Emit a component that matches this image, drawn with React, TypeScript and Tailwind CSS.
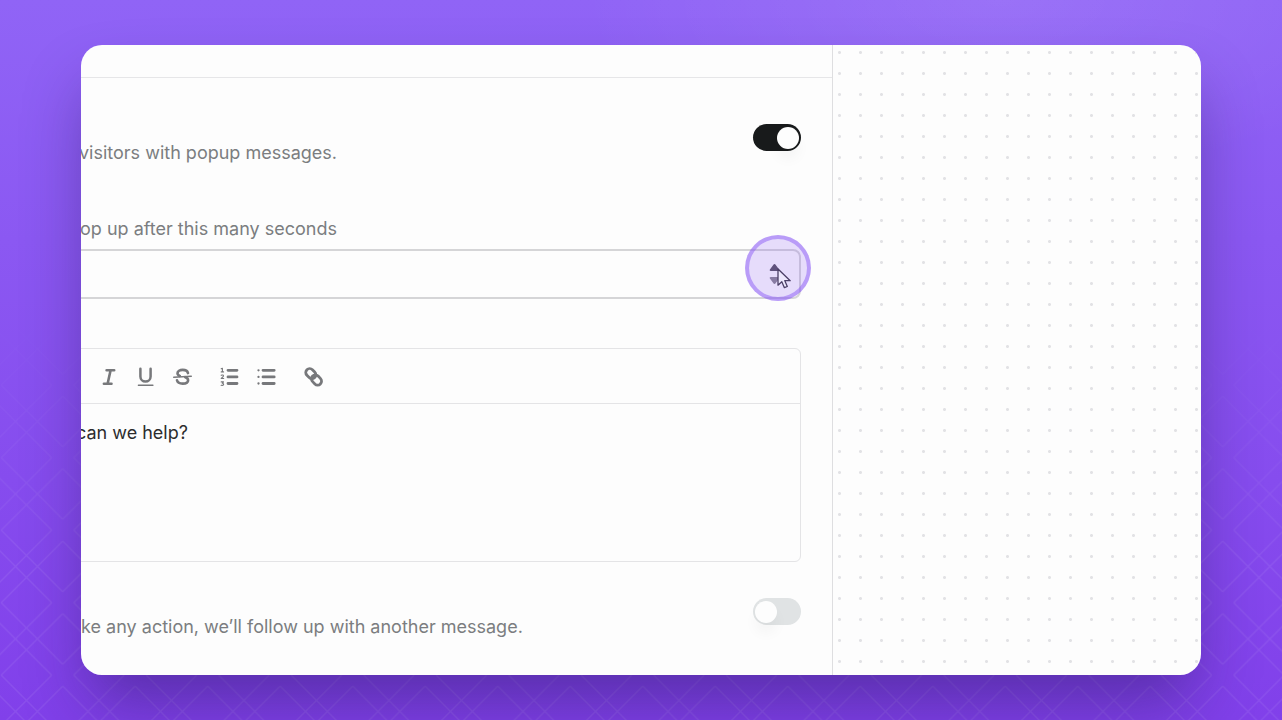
import { useState } from 'react'
import type { ReactNode } from 'react'

function ItalicIcon() {
  return (
    <svg className="size-[22px]" viewBox="0 0 22 22" fill="none" stroke="currentColor" strokeWidth="2.6" strokeLinecap="round">
      <path d="M8.6 5.2h7.6M5.9 18.7h7.6M12.6 5.2 9.6 18.7" />
    </svg>
  )
}

function UnderlineIcon() {
  return (
    <svg className="size-[22px]" viewBox="0 0 22 22" fill="none" stroke="currentColor" strokeLinecap="round">
      <path d="M5.4 3.7v7.8a5.1 5.1 0 0 0 10.2 0V3.7" strokeWidth="2.5" />
      <path d="M3.4 20.3h14.5" strokeWidth="1.4" />
    </svg>
  )
}

function StrikeIcon() {
  return (
    <svg className="size-[22px]" viewBox="0 0 22 22" fill="none" stroke="currentColor" strokeLinecap="round">
      <path
        d="M16 8.1C15.5 6.1 13.4 4.9 10.7 4.9 7.8 4.9 5.5 6.200 5.5 8.3c0 1.3.8 2.1 2.3 2.6M13.2 12.2c1.9.5 2.9 1.5 2.9 3 0 2.1-2.2 3.4-5.4 3.4-3 0-5.2-1.2-5.7-3.3"
        strokeWidth="2.6"
      />
      <path d="M1.7 12.2 19.3 11.2" strokeWidth="1.4" />
    </svg>
  )
}

function NumberedListIcon() {
  return (
    <svg className="size-[22px]" viewBox="0 0 22 22" fill="none" stroke="currentColor" strokeLinecap="round" strokeLinejoin="round">
      <path d="M9 5.3h9M9 11.9h9M9 18.5h9" strokeWidth="2.8" />
      <path
        d="M2.2 3.8l1.2-.6v3.6M2.2 6.9h2.4M2.2 10.3c1.3-.8 2.6-.1 2.2 1-.3.7-1.3 1.1-2.2 2.2h2.5M2.2 16.9h2.3l-1.2 1.4c2.1 0 1.7 2.6-1.2 2"
        strokeWidth="1.1"
      />
    </svg>
  )
}

function BulletListIcon() {
  return (
    <svg className="size-[22px]" viewBox="0 0 22 22" fill="none" stroke="currentColor" strokeLinecap="round">
      <path d="M7 5.3h11.2M7 11.9h11.2M7 18.5h11.2" strokeWidth="2.8" />
      <path d="M2.5 5.3h.01M2.5 11.9h.01M2.5 18.5h.01" strokeWidth="2.3" />
    </svg>
  )
}

function LinkIcon() {
  return (
    <svg className="size-[22px]" viewBox="0 0 22 22" fill="none" stroke="currentColor" strokeWidth="2.8">
      <rect x="2.3" y="4.7" width="11" height="7.8" rx="3.9" transform="rotate(45 7.8 8.6)" />
      <rect x="8" y="11.1" width="11" height="7.8" rx="3.9" transform="rotate(45 13.5 15)" />
    </svg>
  )
}

const TOOL_GROUPS = [
  [
    { label: 'Italic', icon: ItalicIcon },
    { label: 'Underline', icon: UnderlineIcon },
    { label: 'Strikethrough', icon: StrikeIcon },
  ],
  [
    { label: 'Numbered list', icon: NumberedListIcon },
    { label: 'Bulleted list', icon: BulletListIcon },
  ],
  [{ label: 'Link', icon: LinkIcon }],
]

function Lattice() {
  return (
    <svg
      aria-hidden="true"
      className="absolute inset-0 size-full [mask-image:linear-gradient(to_bottom,transparent_42%,black_80%)]"
    >
      <defs>
        <pattern id="lattice" x="62.7" y="22.7" width="72.5" height="72.5" patternUnits="userSpaceOnUse">
          <path
            d="M0 11 61.5 72.5M11 0 72.5 61.5M72.5 11 11 72.5M61.5 0 0 61.5"
            stroke="white"
            strokeOpacity="0.08"
            strokeWidth="1.4"
            fill="none"
          />
        </pattern>
      </defs>
      <rect width="100%" height="100%" fill="url(#lattice)" />
    </svg>
  )
}

function ToggleRow({ id, defaultChecked, children }: { id: string; defaultChecked?: boolean; children: ReactNode }) {
  return (
    <div className="flex items-start justify-between">
      {children}
      <input
        id={id}
        type="checkbox"
        role="switch"
        defaultChecked={defaultChecked}
        className="flex h-[27px] w-12 shrink-0 appearance-none items-center rounded-full bg-[#e0e3e4] px-[2px] before:size-[22px] before:rounded-full before:bg-[#fdfdfd] before:shadow-[0_10px_14px_rgba(0,0,0,0.04)] checked:justify-end checked:bg-[#181a1b]"
      />
    </div>
  )
}

function Pointer() {
  return (
    <div className="pointer-events-none absolute -top-[14px] -right-[10px] size-[66px] rounded-full border-4 border-[#8b5cf6]/50 bg-[#8b5cf6]/20">
      <svg className="absolute top-[29px] left-[28px] h-[22px] w-4" viewBox="0 0 16 22">
        <path
          d="M1 1v16.2l3.8-3.4 2.6 5.9 2.9-1.2-2.5-5.8h5.4z"
          fill="#eee8fd"
          stroke="#4b3f66"
          strokeWidth="1.3"
          strokeLinejoin="round"
        />
      </svg>
    </div>
  )
}

function DelayField() {
  return (
    <div className="relative">
      <input
        id="delay"
        type="number"
        className="block h-[50px] w-full appearance-none rounded-lg border-2 border-[#d5d5d7] bg-[#fdfdfd] px-4 text-lg outline-none [appearance:textfield]"
      />
      <svg className="absolute top-[14px] right-[21px] h-[22px] w-[11px]" viewBox="0 0 11 22" fill="#55505f">
        <path d="M1.7 8c-.9 0-1.3-.8-.8-1.5L4.4 1.7c.5-.8 1.7-.8 2.2 0l3.5 4.8c.5.7.1 1.5-.8 1.5z" />
        <path
          d="M1.7 14c-.9 0-1.3.8-.8 1.5l3.5 4.8c.5.8 1.7.8 2.2 0l3.5-4.8c.5-.7.1-1.5-.8-1.5z"
          fillOpacity="0.7"
        />
      </svg>
      <Pointer />
    </div>
  )
}

function Editor() {
  const [message, setMessage] = useState('can we help?')

  return (
    <div className="overflow-hidden rounded-md border border-[#e4e4e6]">
      <div className="flex h-[55px] items-center gap-[11px] border-b border-[#e4e4e6] pl-[73px] text-[#77787b]">
        {TOOL_GROUPS.map((group, i) => (
          <div key={i} className="flex gap-px">
            {group.map(({ label, icon: Icon }) => (
              <button key={label} type="button" aria-label={label} className="flex size-9 items-center justify-center">
                <Icon />
              </button>
            ))}
          </div>
        ))}
      </div>
      <textarea
        aria-label="Message"
        value={message}
        onChange={(e) => setMessage(e.target.value)}
        className="block h-[157px] w-full resize-none bg-transparent py-[15px] pl-[58px] text-lg leading-7 text-[#2c2c2e] outline-none"
      />
    </div>
  )
}

export default function App() {
  return (
    <main className="relative flex min-h-screen flex-col bg-[radial-gradient(ellipse_420px_180px_at_78%_0%,rgba(255,255,255,0.09),transparent),linear-gradient(to_bottom,#9064f6,#8140ea)] px-[81px] py-[45px] font-['Inter',sans-serif]">
      <Lattice />
      <div className="relative flex flex-1 rounded-[21px] shadow-[0_36px_64px_-8px_rgba(30,20,80,0.42)]">
        <div className="flex flex-1 overflow-hidden rounded-[21px] bg-[#fdfdfd]">
          <section className="min-w-0 flex-1">
            <header className="h-[33px] border-b border-[#e6e6e8]" />
            {/* the form runs out past the left edge of the card */}
            <form className="-ml-16 flex flex-col pt-[46px] pr-[31px] text-lg leading-7 text-[#7b7d80]">
              <ToggleRow id="popup" defaultChecked>
                <label htmlFor="popup" className="pt-[15px] pl-[62px]">
                  visitors with popup messages.
                </label>
              </ToggleRow>
              <label htmlFor="delay" className="mt-12 mb-1.5 pl-[52px]">
                pop up after this many seconds
              </label>
              <DelayField />
              <div className="mt-[49px] mb-9">
                <Editor />
              </div>
              <ToggleRow id="follow-up">
                <label htmlFor="follow-up" className="pt-[15px] pl-12">
                  take any action, we’ll follow up with another message.
                </label>
              </ToggleRow>
            </form>
          </section>
          <aside className="w-[369px] shrink-0 border-l border-[#dedee0] bg-[radial-gradient(circle,#e2e2e5_1px,transparent_2px)] bg-[length:21px_21px] bg-[position:-4px_-3px]" />
        </div>
      </div>
    </main>
  )
}
